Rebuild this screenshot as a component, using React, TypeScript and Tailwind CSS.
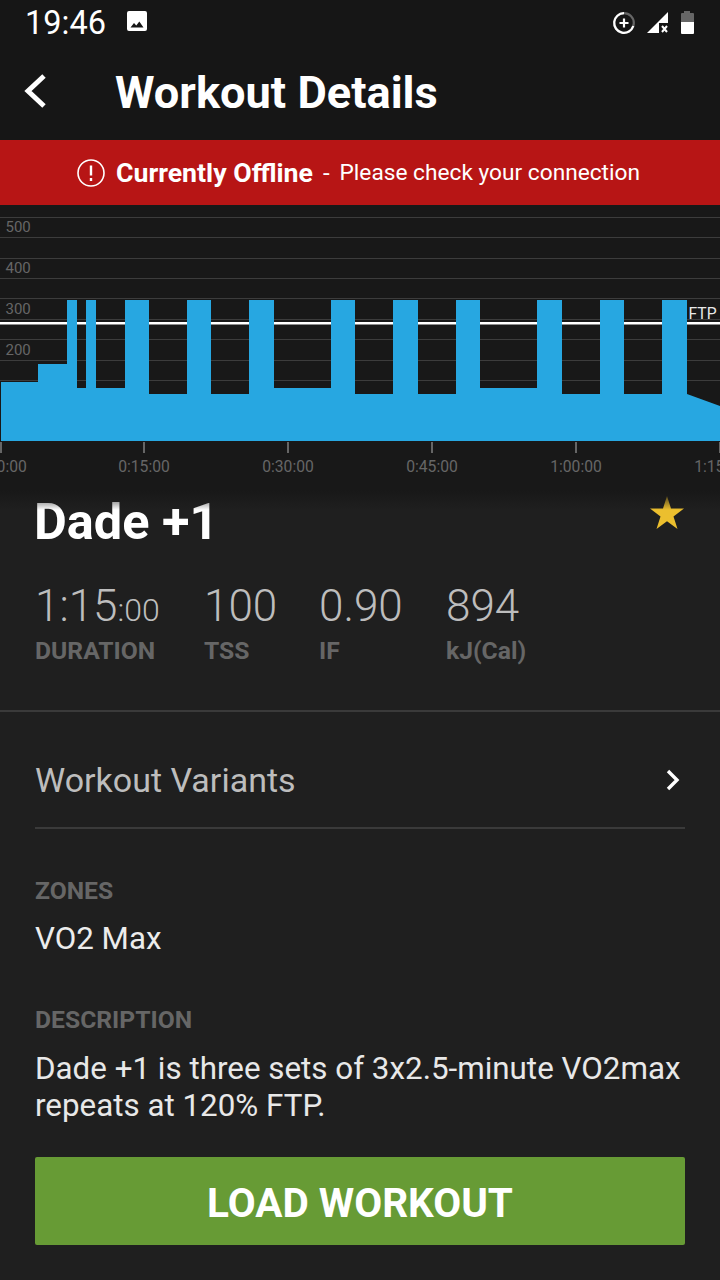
const GRID_LINES = [217.5, 237.5, 258.5, 278.5, 298.5, 319.5, 339.5, 360.5, 380.5];
const Y_LABELS = [
  { label: "500", y: 232 },
  { label: "400", y: 273 },
  { label: "300", y: 314 },
  { label: "200", y: 355 },
];
const TICKS = [
  { x: 1, label: "0:00:00" },
  { x: 144, label: "0:15:00" },
  { x: 288, label: "0:30:00" },
  { x: 432, label: "0:45:00" },
  { x: 576, label: "1:00:00" },
  { x: 720, label: "1:15:00" },
];

// power profile, in the chart's own page coords
const PROFILE =
  "M1 441 V382 H38 V364 H67 V300 H77 V388 H86 V300 H96 V388 H125 V300 H149 V394 H187 V300 H211 V394 H249 V300 H274 V388 H331 V300 H355 V394 H393 V300 H418 V394 H456 V300 H480 V388 H537 V300 H562 V394 H600 V300 H624 V394 H662 V300 H687 V394 L720 406 V441 Z";

function StatusBar() {
  return (
    <div className="flex h-[46px] items-center pl-[25px] pr-[26px] text-white">
      <span className="mt-[1px] text-[32.5px] leading-none">19:46</span>
      <svg className="ml-[21px] mt-[-4px]" width="20" height="20" viewBox="0 0 20 20">
        <path
          fillRule="evenodd"
          fill="white"
          d="M2 0 H18 A2 2 0 0 1 20 2 V18 A2 2 0 0 1 18 20 H2 A2 2 0 0 1 0 18 V2 A2 2 0 0 1 2 0 Z M3.5 16.5 H16.5 L12.3 10.5 L9.3 14.5 L7 12 Z"
        />
      </svg>
      <div className="ml-auto flex items-center">
        <svg width="24" height="24" viewBox="0 0 24 24" fill="none">
          <circle cx="12" cy="12" r="9.8" stroke="#666" strokeWidth="2.2" />
          <path d="M12 2.2 A9.8 9.8 0 1 0 21.3 15" stroke="white" strokeWidth="2.2" />
          <path d="M12 7.5 V16.5 M7.5 12 H16.5" stroke="white" strokeWidth="2.2" />
        </svg>
        <svg className="ml-[11px]" width="21" height="22" viewBox="0 0 21 22">
          <path fill="white" d="M0 21 L21 0 V11 H12 V21 Z" />
          <path d="M15 14 L20 20 M20 14 L15 20" stroke="white" strokeWidth="2" />
        </svg>
        <svg className="ml-[12px] mt-[-1px]" width="14" height="24" viewBox="0 0 14 24">
          <path fill="#666" d="M4 0 H10 V2 H13 A1 1 0 0 1 14 3 V11 H1 V3 A1 1 0 0 1 2 2 H4 Z" />
          <path fill="white" d="M1 11 H14 V22 A1 1 0 0 1 13 23 H2 A1 1 0 0 1 1 22 Z" />
        </svg>
      </div>
    </div>
  );
}

function PowerChart() {
  return (
    <div className="relative z-10 h-[285px] bg-[#181818]">
      <svg width="720" height="285" viewBox="0 205 720 285" className="block">
        {GRID_LINES.map((y) => (
          <line key={y} x1="0" x2="720" y1={y} y2={y} stroke="#3c3c3c" strokeWidth="1" />
        ))}
        {Y_LABELS.map((item) => (
          <text key={item.label} x="5.5" y={item.y} fill="#666" fontSize="15" fontFamily="Roboto, sans-serif">
            {item.label}
          </text>
        ))}
        <rect x="0" y="322" width="720" height="2.5" fill="white" />
        <text x="688.5" y="319" fill="#e8e8e8" fontSize="15.7" fontFamily="Roboto, sans-serif">
          FTP
        </text>
        <path d={PROFILE} fill="#27a7e1" />
        {TICKS.map((tick) => (
          <g key={tick.x}>
            <rect x={tick.x - 1} y="442" width="2" height="11" fill="#666" />
            <text
              x={tick.x}
              y="472"
              textAnchor="middle"
              fill="#666"
              fontSize="15.7"
              fontFamily="Roboto, sans-serif"
            >
              {tick.label}
            </text>
          </g>
        ))}
      </svg>
    </div>
  );
}

function Stat({ value, small, label, className }: { value: string; small?: string; label: string; className: string }) {
  return (
    <div className={className}>
      <div className="text-[44px] font-light leading-[52px] text-[#bdbdbd]">
        {value}
        {small && <span className="text-[32px] leading-none">{small}</span>}
      </div>
      <div className="mt-[5px] text-[24.7px] font-bold leading-[28px] text-[#666]">{label}</div>
    </div>
  );
}

export default function App() {
  return (
    <div className="flex h-[1280px] w-[720px] flex-col overflow-hidden bg-[#1f1f1f] font-['Roboto',sans-serif]">
      <div className="h-[140px] bg-[#161616]">
        <StatusBar />
        <div className="flex h-[94px] items-center pl-[23px]">
          <svg className="mt-[-4px]" width="24" height="36" viewBox="0 0 24 36" fill="none">
            <path d="M21 3 L5 18 L21 33" stroke="white" strokeWidth="5" />
          </svg>
          <h1 className="ml-[68px] text-[45.2px] font-bold leading-none text-white">Workout Details</h1>
        </div>
      </div>

      <div className="flex h-[65px] items-center bg-[#b71515] pl-[77px] text-white">
        <svg width="28" height="28" viewBox="0 0 28 28" fill="none">
          <circle cx="14" cy="14" r="13" stroke="white" strokeWidth="1.6" />
          <path d="M14 6.5 V16.5 M14 19 V22" stroke="white" strokeWidth="2.4" />
        </svg>
        <span className="ml-[11px] mt-[2px] text-[26.7px] font-bold">Currently Offline</span>
        <span className="ml-[10px] text-[24px]">-</span>
        <span className="ml-[10px] mt-[2px] text-[22.7px]">Please check your connection</span>
      </div>

      <PowerChart />
      <div className="relative z-10 -mb-[20px] h-[20px] bg-gradient-to-b from-[#181818] to-transparent" />

      <div className="relative flex-1 pl-[35px] pr-[35px]">
        <div className="flex items-start justify-between">
          <h2 className="-ml-[1px] text-[50.5px] font-bold leading-[64px] text-white">Dade +1</h2>
          <svg className="mr-[1px] mt-[6px]" width="34" height="33" viewBox="0 0 34 33">
            <path fill="#ecbf2e" d="M17 0 L21 12.6 H34 L23.5 20.4 L27.5 33 L17 25.2 L6.5 33 L10.5 20.4 L0 12.6 H13 Z" />
          </svg>
        </div>
        <div className="mt-[26px] flex">
          <Stat value="1:15" small=":00" label="DURATION" className="w-[169px]" />
          <Stat value="100" label="TSS" className="w-[115px]" />
          <Stat value="0.90" label="IF" className="w-[127px]" />
          <Stat value="894" label="kJ(Cal)" className="w-[120px]" />
        </div>
        <div className="-mx-[35px] mt-[45px] h-[2px] bg-[#3a3a3a]" />

        <div className="flex h-[117px] items-center justify-between border-b-2 border-[#3a3a3a] pt-[20px]">
          <span className="text-[34px] leading-[40px] text-[#bdbdbd]">Workout Variants</span>
          <svg className="mr-[5px]" width="14" height="22" viewBox="0 0 14 22" fill="none">
            <path d="M2 2 L11 11 L2 20" stroke="white" strokeWidth="3.4" />
          </svg>
        </div>

        <div className="mt-[48px] text-[24.7px] font-bold leading-[28px] text-[#666]">ZONES</div>
        <div className="mt-[15px] text-[31.3px] leading-[38px] text-[#ececec]">VO2 Max</div>

        <div className="mt-[48px] text-[24.7px] font-bold leading-[28px] text-[#666]">DESCRIPTION</div>
        <p className="mt-[16px] text-[31.35px] leading-[37px] text-[#e8e8e8]">
          Dade +1 is three sets of 3x2.5-minute VO2max repeats at 120% FTP.
        </p>

        <button className="mt-[33px] flex h-[88px] w-full items-center justify-center rounded-[2px] bg-[#679b35] pt-[4px] text-[40.5px] font-bold text-white">
          LOAD WORKOUT
        </button>
      </div>
    </div>
  );
}
